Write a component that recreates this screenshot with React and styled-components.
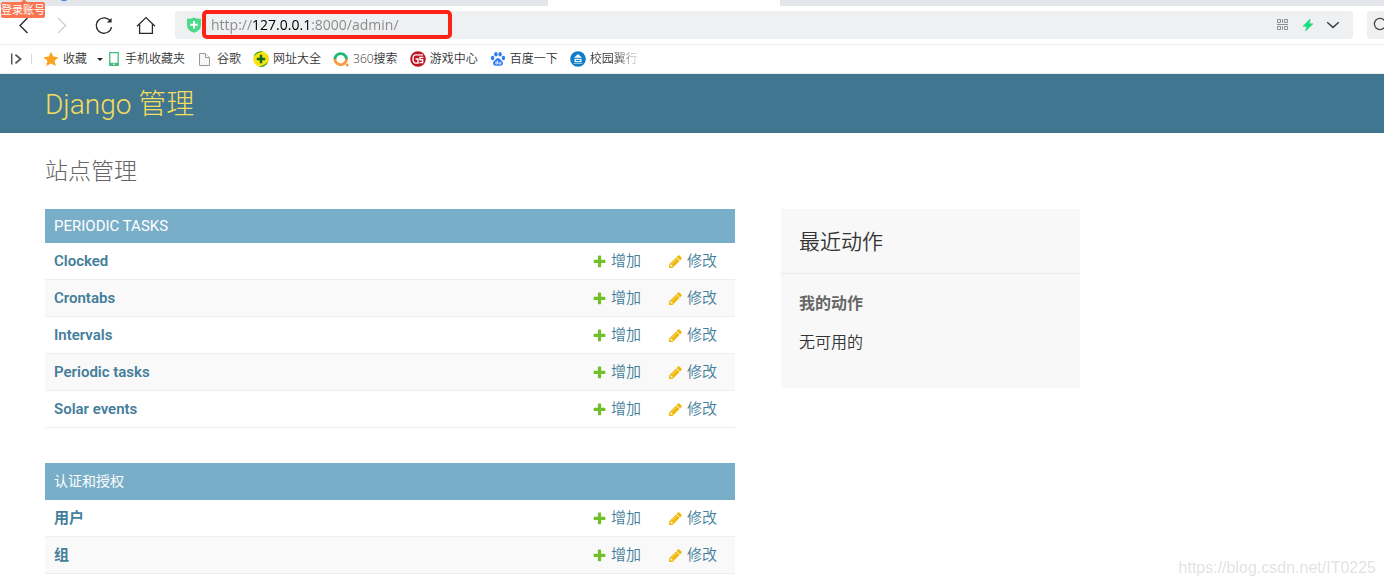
import React from 'react';
import styled, { createGlobalStyle } from 'styled-components';

const GlobalStyle = createGlobalStyle`
  * {
    box-sizing: border-box;
  }

  body {
    margin: 0;
    background: #fff;
    color: #333;
    font-family: Roboto, 'Noto Sans CJK SC', sans-serif;
    font-size: 15px;
  }

  a {
    color: inherit;
    text-decoration: none;
  }
`;

/* Browser chrome */

const Chrome = styled.div`
  position: relative;
  overflow: hidden;
  font-family: 'Open Sans', 'Noto Sans CJK SC', sans-serif;
`;

const TabStrip = styled.div`
  display: flex;
  height: 6px;
  padding-left: 548px;
  background: #e3e6eb;
`;

const ActiveTab = styled.div`
  width: 232px;
  background: #fff;
`;

const TabIcon = styled.svg`
  position: absolute;
  top: 0;
  left: 58px;
`;

const LoginBadge = styled.button`
  position: absolute;
  top: 2px;
  left: 1px;
  padding: 0;
  border: none;
  border-radius: 2px;
  background: #fb7550;
  color: #fff;
  font-family: inherit;
  font-size: 11px;
  line-height: 16px;

  &::before {
    content: '';
    position: absolute;
    top: -3px;
    left: 19px;
    border: 4px solid transparent;
    border-top: none;
    border-bottom-color: #fb7550;
  }
`;

const Toolbar = styled.div`
  display: flex;
  align-items: center;
  height: 39px;
  border-bottom: 1px solid #ebecee;
`;

const NavButton = styled.button`
  flex: none;
  width: ${p => p.$width || 42}px;
  height: 28px;
  padding: 0;
  border: none;
  background: none;
  color: ${p => (p.disabled ? '#cfcfcf' : '#2b2b2b')};

  svg {
    display: block;
    margin: 0 auto;
  }
`;

const AddressBar = styled.div`
  position: relative;
  display: flex;
  flex: 1;
  align-items: center;
  height: 28px;
  margin-left: 10px;
  padding: 0 8px 0 11px;
  border-radius: 4px;
  background: #eff0f2;
`;

/* the host part of the address is darker than the rest */
const AddressInput = styled.input`
  flex: 1;
  min-width: 0;
  margin-left: 9px;
  padding: 0;
  border: none;
  outline: none;
  background: linear-gradient(to right, #888 42px, #000 42px, #000 99px, #888 99px);
  background-clip: text;
  -webkit-background-clip: text;
  color: transparent;
  caret-color: #000;
  font-family: inherit;
  font-size: 14px;
  line-height: 20px;
`;

const Highlight = styled.div`
  position: absolute;
  top: -1px;
  left: 27px;
  width: 250px;
  height: 29px;
  border: 4px solid #fc2216;
  border-radius: 5px;
  pointer-events: none;
`;

const AddressAction = styled(NavButton)`
  width: 25px;
`;

const SearchButton = styled.button`
  flex: none;
  width: 17px;
  height: 28px;
  margin-left: 14px;
  padding: 0 0 0 6px;
  overflow: hidden;
  border: none;
  border-radius: 4px 0 0 4px;
  background: #eff0f2;

  svg {
    display: block;
  }
`;

const BookmarkBar = styled.nav`
  display: flex;
  align-items: center;
  height: 29px;
  padding-left: 8px;
  border-bottom: 1px solid #ebecee;
`;

const Divider = styled.span`
  width: 1px;
  height: 10px;
  margin: 0 11px 0 7px;
  background: #d8d8d8;
`;

const Bookmark = styled.a`
  display: flex;
  align-items: center;
  gap: 4px;
  margin-right: 12px;
  color: #333;
  font-size: 12px;
  font-weight: 350;
  line-height: 16px;
  white-space: nowrap;

  &:last-child span {
    background: linear-gradient(to right, #333 50%, #ddd);
    background-clip: text;
    -webkit-background-clip: text;
    color: transparent;
  }
`;

const Caret = styled.span`
  margin-left: -2px;
  margin-right: 2px;
  border: 3px solid transparent;
  border-top-color: #222;
  border-bottom: none;
`;

/* Django admin */

const Header = styled.header`
  padding: 16px 45px 13px;
  background: #417690;
`;

const SiteName = styled.h1`
  margin: 0;
  color: #f5dd5d;
  font-size: 28px;
  font-weight: 300;
  line-height: 30px;
`;

const Content = styled.main`
  padding: 26px 45px 12px;
`;

const PageTitle = styled.h1`
  margin: 0 0 24px;
  color: #666;
  font-size: 23px;
  font-weight: 300;
  line-height: 26px;
`;

const Columns = styled.div`
  display: flex;
  align-items: flex-start;
  gap: 46px;
  max-width: 1035px;
`;

const Modules = styled.div`
  display: grid;
  flex: 1;
  gap: 35px;
`;

const ModuleTable = styled.table`
  width: 100%;
  border-collapse: separate;
  border-spacing: 0;
`;

const ModuleCaption = styled.caption`
  padding: ${p => (p.$tall ? 9 : 8)}px 9px;
  background: #79aec8;
  color: #fff;
  font-size: ${p => (p.$tall ? 14 : 15)}px;
  font-weight: 400;
  line-height: ${p => (p.$tall ? 19 : 18)}px;
  text-align: left;
  text-transform: uppercase;
`;

const Row = styled.tr`
  background: #fff;
  color: #447e9b;

  &:nth-child(even) {
    background: #f9f9f9;
  }
`;

const ModelName = styled.th`
  padding: 8px 9px;
  border-bottom: 1px solid #eee;
  font-weight: 600;
  line-height: 20px;
  text-align: left;
`;

const ActionCell = styled.td`
  width: 1px;
  padding: 8px 18px 8px 9px;
  border-bottom: 1px solid #eee;
  font-weight: 350;
  line-height: 20px;
  white-space: nowrap;
`;

const ActionLink = styled.a`
  display: flex;
  align-items: center;
  gap: 4px;
`;

const Sidebar = styled.aside`
  width: 299px;
  padding-bottom: 34px;
  background: #f8f8f8;
`;

const SidebarTitle = styled.h2`
  margin: 0;
  padding: 18px 18px 16px;
  border-bottom: 1px solid #eaeaea;
  font-size: 21px;
  font-weight: 350;
  line-height: 30px;
`;

const SidebarSubtitle = styled.h3`
  margin: 18px 18px 16px;
  color: #666;
  font-size: 16px;
  font-weight: 700;
  line-height: 24px;
`;

const SidebarText = styled.p`
  margin: 0 18px;
  font-size: 16px;
  font-weight: 350;
  line-height: 22px;
`;

const Watermark = styled.div`
  position: fixed;
  right: 8px;
  bottom: 9px;
  color: #e2e2e2;
  font-family: 'Liberation Sans', sans-serif;
  font-size: 16px;
  line-height: 18px;
`;

const Icon = ({ size = 16, children, ...rest }) => (
  <svg
    width={size}
    height={size}
    viewBox={`0 0 ${size} ${size}`}
    fill="none"
    stroke="currentColor"
    aria-hidden="true"
    {...rest}
  >
    {children}
  </svg>
);

const BackIcon = () => (
  <Icon size={20}>
    <path d="M14.5 3 L7 10.5 L14.5 18" strokeWidth="1.4" />
  </Icon>
);

const ForwardIcon = () => (
  <Icon size={20}>
    <path d="M6 3 L13.5 10.5 L6 18" strokeWidth="1.4" />
  </Icon>
);

const ReloadIcon = () => (
  <Icon size={20}>
    <path d="M17.6 6.4 A7.7 7.7 0 1 0 18.6 12.2" strokeWidth="1.3" />
    <path d="M18.6 3 V7.6 H13.8 Z" fill="currentColor" stroke="none" />
  </Icon>
);

const HomeIcon = () => (
  <Icon size={20}>
    <path d="M1 11.2 L10 2.6 L19 11.2 M3.6 9.5 V18.4 H16.4 V9.5" strokeWidth="1.3" />
  </Icon>
);

const ShieldIcon = () => (
  <Icon size={16} stroke="none">
    <path d="M8 0.4 Q11 2 15 1.7 V8 Q15 13.4 8 15.8 Q1 13.4 1 8 V1.7 Q5 2 8 0.4 Z" fill="#4cd98a" />
    <path d="M8 4 V11.6 M4.2 7.8 H11.8" stroke="#fff" strokeWidth="2" />
  </Icon>
);

const QrIcon = () => (
  <Icon size={12} stroke="#8c8f92">
    <path d="M0.5 0.5 H3.5 V3.5 H0.5 Z M7.5 0.5 H10.5 V3.5 H7.5 Z M0.5 7.5 H3.5 V10.5 H0.5 Z M7.5 7.5 H10.5 V10.5 H7.5 Z M5.5 0 V4 M5.5 7 V11 M0 5.5 H11" />
  </Icon>
);

const BoltIcon = () => (
  <Icon size={12} stroke="none">
    <path d="M8.2 0 L1 7.2 H4.6 L3.6 12 L11 4.8 H7.4 Z" fill="#1fdc80" stroke="#1fdc80" strokeWidth="0.6" />
  </Icon>
);

const ChevronIcon = () => (
  <Icon size={14} stroke="#444">
    <path d="M1.2 4.2 L7 9.4 L12.8 4.2" strokeWidth="1.5" />
  </Icon>
);

const SearchIcon = () => (
  <Icon size={18} stroke="#444">
    <circle cx="7" cy="8" r="5.6" strokeWidth="1.3" />
    <path d="M11 12 L15 16" strokeWidth="1.3" />
  </Icon>
);

const PanelIcon = () => (
  <Icon stroke="#555">
    <path d="M3.7 2.5 V13.5" strokeWidth="1.5" />
    <path d="M7.4 3.6 L12.6 8 L7.4 12.4" strokeWidth="1.8" />
  </Icon>
);

const StarIcon = () => (
  <Icon stroke="none">
    <path
      d="M8 0.8 L10.2 5.6 L15.5 6.2 L11.6 9.8 L12.7 15 L8 12.4 L3.3 15 L4.4 9.8 L0.5 6.2 L5.8 5.6 Z"
      fill="#fca21b"
    />
  </Icon>
);

const PhoneIcon = () => (
  <Icon>
    <path d="M4.8 1.7 H13.2 V14.3 H4.8 Z" stroke="#41bf7f" strokeWidth="1.3" />
    <path d="M4.5 11.8 H13.5 V14.4 H4.5 Z" fill="#41bf7f" stroke="none" />
    <path d="M8 13.2 H10" stroke="#fff" />
  </Icon>
);

const PageIcon = () => (
  <Icon stroke="#999">
    <path d="M2.5 2.5 H8.5 L12.5 6.5 V14.5 H2.5 Z" fill="#f7f7f7" />
    <path d="M8.5 2.5 V6.5 H12.5" fill="#fff" />
  </Icon>
);

const HaoIcon = () => (
  <Icon stroke="none">
    <circle cx="8" cy="8" r="7.8" fill="#f7e40c" />
    <path d="M0.6 5.6 A7.8 7.8 0 0 1 10.5 0.6 Q4 1.6 0.6 5.6 Z M15.4 10.4 A7.8 7.8 0 0 1 5.5 15.4 Q12 14.4 15.4 10.4 Z" fill="#2f9e26" />
    <path d="M13.4 2.5 A7.8 7.8 0 0 1 15.5 9 Q15 5 13.4 2.5 Z" fill="#e8a80c" />
    <path d="M8 3.8 V12.2 M3.8 8 H12.2" stroke="#0b6a1d" strokeWidth="2.4" />
  </Icon>
);

const SearchRingIcon = () => (
  <Icon>
    <path d="M1.9 8.4 A5.8 5.8 0 0 1 13.5 8.4" stroke="#1fb573" strokeWidth="2.8" />
    <path d="M1.9 8 A5.8 5.8 0 0 0 13.5 8" stroke="#fb9a3c" strokeWidth="2.8" />
    <circle cx="14.2" cy="14" r="1.5" fill="#fb9a3c" stroke="none" />
  </Icon>
);

const GameIcon = () => (
  <Icon>
    <circle cx="8" cy="8" r="7.8" fill="#bd1526" stroke="none" />
    <path d="M13 3.9 H6 Q3 3.9 3 8 Q3 12.1 6 12.1 H8 V8 H5.6" stroke="#fff" strokeWidth="1.4" />
    <path d="M13.4 6.4 H10 V8.8 H12.6 V11.6 H9.4" stroke="#fff" strokeWidth="1.4" />
  </Icon>
);

const PawIcon = () => (
  <Icon stroke="none" fill="#2f7cf2">
    <ellipse cx="2.6" cy="7" rx="1.7" ry="2.2" />
    <ellipse cx="5.9" cy="3.3" rx="1.7" ry="2.3" />
    <ellipse cx="10.1" cy="3.3" rx="1.7" ry="2.3" />
    <ellipse cx="13.4" cy="7" rx="1.7" ry="2.2" />
    <path d="M8 7 Q9.6 7 10.6 8.8 Q13.6 11 13 13 Q12.2 15.2 8 14.8 Q3.8 15.2 3 13 Q2.4 11 5.4 8.8 Q6.4 7 8 7 Z" />
    <path d="M7.4 9.6 V13 H5.8 V11.2 H7.4 M9 10.8 V13 H10.8 V10.8" fill="none" stroke="#fff" strokeWidth="0.8" />
  </Icon>
);

const CampusIcon = () => (
  <Icon stroke="none">
    <circle cx="8" cy="8" r="7.8" fill="#0f7cc6" />
    <path d="M8 3 L12 6.8 H4 Z" fill="#fff" />
    <path d="M4.4 7.8 H11.6 V11.2 H4.4 Z" fill="#d9ecf8" />
    <path d="M6 9.5 H10" stroke="#0f7cc6" />
    <path d="M3.6 12.4 H12.4" stroke="#8cc7ec" />
  </Icon>
);

const AddIcon = () => (
  <svg width="15" height="15" viewBox="0 0 1792 1792" aria-hidden="true">
    <path
      fill="#70bf2b"
      d="M1600 796v192q0 40-28 68t-68 28h-416v416q0 40-28 68t-68 28h-192q-40 0-68-28t-28-68v-416h-416q-40 0-68-28t-28-68v-192q0-40 28-68t68-28h416v-416q0-40 28-68t68-28h192q40 0 68 28t28 68v416h416q40 0 68 28t28 68z"
    />
  </svg>
);

const ChangeIcon = () => (
  <svg width="15" height="15" viewBox="0 0 1792 1792" aria-hidden="true">
    <path
      fill="#efb80b"
      d="M491 1536l91-91-235-235-91 91v107h128v128h107zm523-928q0-22-22-22-10 0-17 7l-542 542q-7 7-7 17 0 22 22 22 10 0 17-7l542-542q7-7 7-17zm-54-192l416 416-832 832h-416v-416zm683 96q0 53-37 90l-166 166-416-416 166-165q36-38 90-38 53 0 91 38l235 234q37 39 37 91z"
    />
  </svg>
);

const bookmarks = [
  { label: '手机收藏夹', icon: PhoneIcon },
  { label: '谷歌', icon: PageIcon },
  { label: '网址大全', icon: HaoIcon },
  { label: '360搜索', icon: SearchRingIcon },
  { label: '游戏中心', icon: GameIcon },
  { label: '百度一下', icon: PawIcon },
  { label: '校园翼行', icon: CampusIcon },
];

const apps = [
  {
    name: 'Periodic Tasks',
    models: ['Clocked', 'Crontabs', 'Intervals', 'Periodic tasks', 'Solar events'],
  },
  { name: '认证和授权', tall: true, models: ['用户', '组'] },
];

const Browser = () => (
  <Chrome>
    <TabStrip>
      <ActiveTab />
    </TabStrip>
    <TabIcon width="12" height="2" aria-hidden="true">
      <circle cx="6" cy="-5" r="6" fill="#2a78e8" />
    </TabIcon>
    <Toolbar>
      <NavButton $width={45} aria-label="后退">
        <BackIcon />
      </NavButton>
      <NavButton $width={34} aria-label="前进" disabled>
        <ForwardIcon />
      </NavButton>
      <NavButton $width={48} aria-label="刷新">
        <ReloadIcon />
      </NavButton>
      <NavButton $width={38} aria-label="主页">
        <HomeIcon />
      </NavButton>
      <AddressBar>
        <ShieldIcon />
        <AddressInput aria-label="地址" defaultValue="http://127.0.0.1:8000/admin/" />
        <AddressAction aria-label="二维码">
          <QrIcon />
        </AddressAction>
        <AddressAction aria-label="极速模式">
          <BoltIcon />
        </AddressAction>
        <AddressAction aria-label="展开">
          <ChevronIcon />
        </AddressAction>
        <Highlight />
      </AddressBar>
      <SearchButton aria-label="搜索">
        <SearchIcon />
      </SearchButton>
    </Toolbar>
    <BookmarkBar>
      <PanelIcon />
      <Divider />
      <Bookmark href="#">
        <StarIcon />
        <span>收藏</span>
      </Bookmark>
      <Caret />
      {bookmarks.map(({ label, icon: BookmarkIcon }) => (
        <Bookmark href="#" key={label}>
          <BookmarkIcon />
          <span>{label}</span>
        </Bookmark>
      ))}
    </BookmarkBar>
    <LoginBadge>登录账号</LoginBadge>
  </Chrome>
);

const AppModule = ({ name, models, tall }) => (
  <ModuleTable>
    <ModuleCaption $tall={tall}>
      <a href="#">{name}</a>
    </ModuleCaption>
    <tbody>
      {models.map(model => (
        <Row key={model}>
          <ModelName scope="row">
            <a href="#">{model}</a>
          </ModelName>
          <ActionCell>
            <ActionLink href="#">
              <AddIcon />
              增加
            </ActionLink>
          </ActionCell>
          <ActionCell>
            <ActionLink href="#">
              <ChangeIcon />
              修改
            </ActionLink>
          </ActionCell>
        </Row>
      ))}
    </tbody>
  </ModuleTable>
);

const App = () => (
  <>
    <GlobalStyle />
    <Browser />
    <Header>
      <SiteName>
        <a href="#">Django 管理</a>
      </SiteName>
    </Header>
    <Content>
      <PageTitle>站点管理</PageTitle>
      <Columns>
        <Modules>
          {apps.map(app => (
            <AppModule key={app.name} {...app} />
          ))}
        </Modules>
        <Sidebar>
          <SidebarTitle>最近动作</SidebarTitle>
          <SidebarSubtitle>我的动作</SidebarSubtitle>
          <SidebarText>无可用的</SidebarText>
        </Sidebar>
      </Columns>
    </Content>
    <Watermark>https://blog.csdn.net/IT0225</Watermark>
  </>
);

export default App;
